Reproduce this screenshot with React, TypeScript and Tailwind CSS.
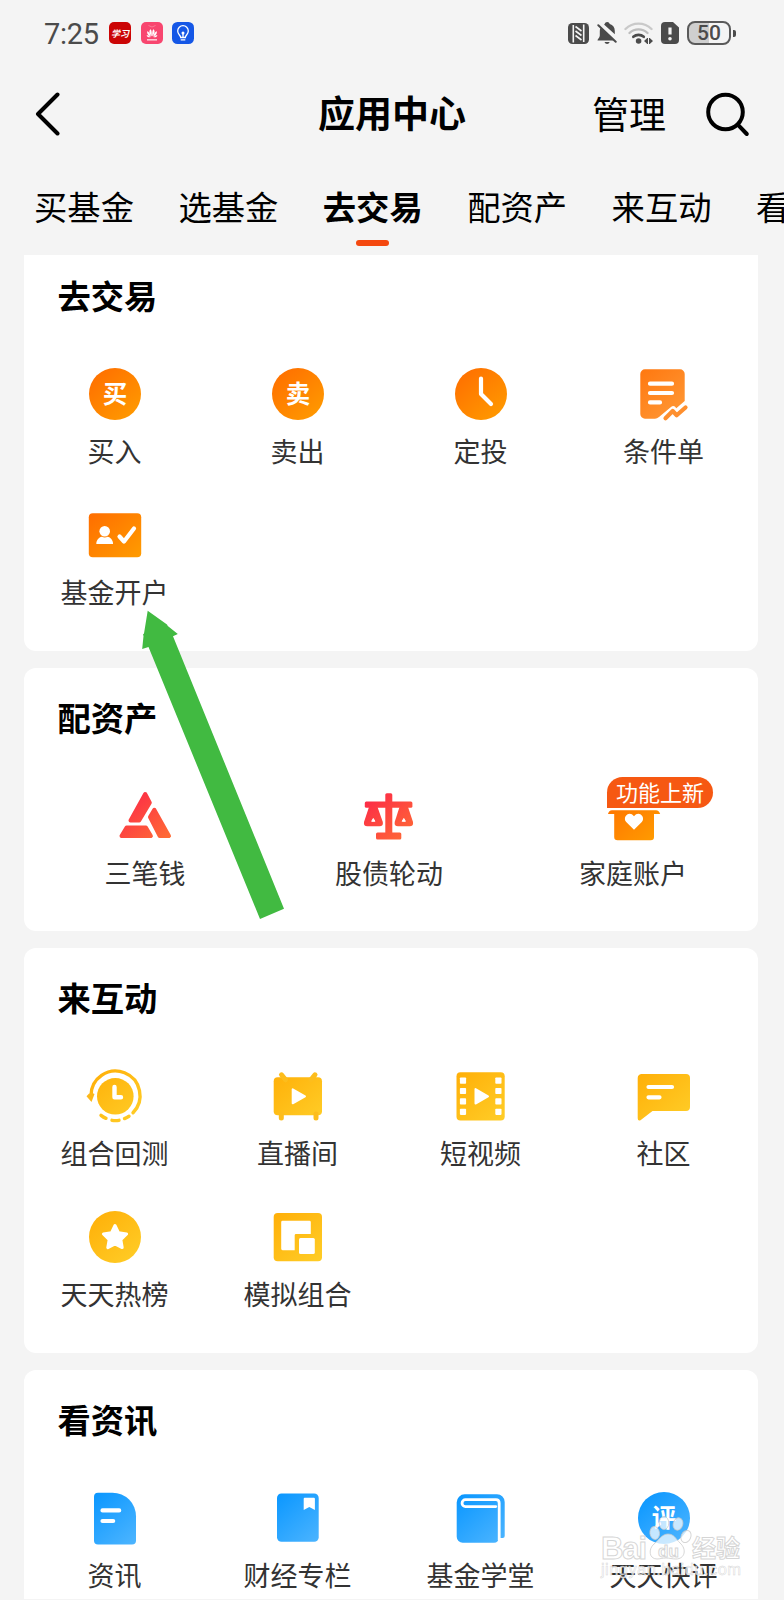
import type { ReactNode } from "react";

type Item = { label: string; icon: ReactNode; badge?: string };
type Section = { title: string; cols: 3 | 4; items: Item[] };

const Icon = ({ children }: { children: ReactNode }) => (
  <svg viewBox="0 0 60 60" className="h-[60px] w-[60px]">
    {children}
  </svg>
);

const Disc = ({ fill, char }: { fill: string; char?: string }) => (
  <>
    <circle cx="30" cy="30" r="26" fill={fill} />
    {char && (
      <text x="30" y="39" fontSize="24.5" fontWeight="700" textAnchor="middle" fill="#fff">
        {char}
      </text>
    )}
  </>
);

const line = {
  fill: "none",
  stroke: "#fff",
  strokeWidth: 4.2,
  strokeLinecap: "round",
  strokeLinejoin: "round",
} as const;

const SECTIONS: Section[] = [
  {
    title: "去交易",
    cols: 4,
    items: [
      { label: "买入", icon: <Disc fill="url(#orange)" char="买" /> },
      { label: "卖出", icon: <Disc fill="url(#orange)" char="卖" /> },
      {
        label: "定投",
        icon: (
          <>
            <Disc fill="url(#orange)" />
            <path d="M30 14.5V30l10 10" {...line} />
          </>
        ),
      },
      {
        label: "条件单",
        icon: (
          <>
            <path
              d="M11 5.3h35a4.7 4.7 0 0 1 4.7 4.700V37l-8.400 7.300q-2.300-4-5.300-1.300L25 53q-2 1.700-4 1.700H11A4.7 4.7 0 0 1 6.3 50V10A4.7 4.7 0 0 1 11 5.3z"
              fill="url(#amber)"
            />
            <path d="M16 19.7h22M16 29h22M16 38.4h10" {...line} />
            <path d="m31.500 54.300 7.200-7.300 4 4.300 8.800-7.800" {...line} stroke="#fe8f2e" />
          </>
        ),
      },
      {
        label: "基金开户",
        icon: (
          <>
            <rect x="3.8" y="8.2" width="52.4" height="44" rx="4" fill="url(#orange)" />
            <circle cx="19.7" cy="26.300" r="5.3" fill="#fff" />
            <path d="M11.3 39c0-4.500 3.500-7 5.400-7.200q3 1.400 6 0c1.900.200 5.400 2.700 5.400 7.200z" fill="#fff" />
            <path d="m34.500 31.500 4.500 5 10-13" {...line} />
          </>
        ),
      },
    ],
  },
  {
    title: "配资产",
    cols: 3,
    items: [
      {
        label: "三笔钱",
        icon: (
          <g fill="url(#red)" stroke="url(#red)" strokeWidth="4" strokeLinejoin="round">
            <path d="M30.2 8 34.8 16.7 24.2 34.4H15.5z" />
            <path d="M11.6 41.5h19.3l5 8.5H6.5z" />
            <path d="M39.3 23.8 54 50h-9.3L35 31z" />
          </g>
        ),
      },
      {
        label: "股债轮动",
        icon: (
          <g fill="url(#red)">
            <rect x="26.3" y="7.3" width="7" height="42" rx="1.5" />
            <rect x="5.8" y="15.6" width="47.6" height="6.2" rx="1.5" />
            <rect x="17" y="46.5" width="25.3" height="6.9" rx="1.5" />
            <path d="M10 21h8.500l5.300 15q.7 4.3-3.3 4.3H8.3q-4 0-3.3-4.3z" />
            <path d="M40.500 21H49L54 36q.7 4.3-3.3 4.3H39q-4 0-3.3-4.3z" />
            <path d="m14.3 32.500-1.600 2.800h3.200zM44.8 32.500l-1.600 2.800h3.200z" fill="#fff" stroke="#fff" />
          </g>
        ),
      },
      {
        label: "家庭账户",
        badge: "功能上新",
        icon: (
          <>
            <path
              d="M9 24.3h44q3 0 4.2 3.8H51V51q0 3.3-3.3 3.3H14.5q-3.3 0-3.3-3.3V28.1H5q.8-3.8 4-3.8z"
              fill="url(#orange)"
            />
            <path
              d="M31 43.800 23.200 36c-4.400-5.200 3.400-12.200 7.800-5.700 4.400-6.500 12.200.5 7.800 5.700z"
              fill="#fff"
            />
          </>
        ),
      },
    ],
  },
  {
    title: "来互动",
    cols: 4,
    items: [
      {
        label: "组合回测",
        icon: (
          <>
            <circle cx="30.3" cy="30.3" r="18.300" fill="url(#yellow)" />
            <g {...line} stroke="url(#yellow)" strokeWidth="3.400">
              <path d="M6 30A24.500 24.500 0 1 1 48 46.700" />
              <path d="M16 49.300q2.500 2 5 3M27 54.300q3.500.7 7 0M39.500 52.600q2.500-1 4.500-2.300" />
            </g>
            <path d="M1.500 30.200q3.500-5 8-2.200L6.500 36z" fill="#fdb81a" />
            <path d="M29.500 21v10.300h6.500" {...line} strokeWidth="4.400" />
          </>
        ),
      },
      {
        label: "直播间",
        icon: (
          <>
            <rect x="5.7" y="11.3" width="48.3" height="37.9" rx="4" fill="url(#yellow)" />
            <path d="m13.500 8.800 4 5M47 8.800l-4 5M13.300 48v4M48 48v4" {...line} stroke="#fdbd1c" strokeWidth="5" />
            <path d="M24.700 23.300v14l12.300-7z" {...line} fill="#fff" strokeWidth="2" />
          </>
        ),
      },
      {
        label: "短视频",
        icon: (
          <>
            <rect x="5.5" y="6.2" width="48.2" height="48.2" rx="4" fill="url(#yellow)" />
            {[11.5, 21.9, 32.3, 42.7].map((y) => (
              <g key={y} fill="#fff">
                <rect x="8.9" y={y} width="6.2" height="6.2" rx="0.8" />
                <rect x="44.3" y={y} width="6.2" height="6.2" rx="0.8" />
              </g>
            ))}
            <path d="M24.500 23v14.600l12.500-7.200z" {...line} fill="#fff" strokeWidth="2" />
          </>
        ),
      },
      {
        label: "社区",
        icon: (
          <>
            <path
              d="M8 8h44a4 4 0 0 1 4 4v29a4 4 0 0 1-4 4H18.500L6.500 54.200q-2.800 1-2.800-2V12A4 4 0 0 1 8 8z"
              fill="url(#yellow)"
            />
            <path d="M14.500 21H38M14.500 31.300h11" {...line} />
          </>
        ),
      },
      {
        label: "天天热榜",
        icon: (
          <>
            <Disc fill="url(#yellow)" />
            <path
              d="m30 18.500 3.600 7.300 8 1.200-5.800 5.600 1.400 8-7.200-3.800-7.200 3.800 1.400-8-5.800-5.600 8-1.200z"
              {...line}
              fill="#fff"
              strokeWidth="3"
            />
          </>
        ),
      },
      {
        label: "模拟组合",
        icon: (
          <>
            <rect x="5.7" y="6" width="48.3" height="48.3" rx="4" fill="url(#yellow)" />
            <path
              d="M14.600 13.800h26.800q1.400 0 1.400 1.400V27H28q-1.300 0-1.300 1.300V43.200H14.600q-1.400 0-1.400-1.400V15.200q0-1.400 1.400-1.400z"
              fill="#fff"
            />
            <rect x="31" y="31" width="15.8" height="16" rx="1.5" fill="#fff" />
          </>
        ),
      },
    ],
  },
  {
    title: "看资讯",
    cols: 4,
    items: [
      {
        label: "资讯",
        icon: (
          <>
            <path
              d="M13 4.700h14.500A23.500 23.500 0 0 1 51 28.200v24.300a4 4 0 0 1-4 4H13a4 4 0 0 1-4-4V8.700a4 4 0 0 1 4-4z"
              fill="url(#blue)"
            />
            <path d="M17.500 22.400h16.700M17.500 33h10.700" {...line} />
          </>
        ),
      },
      {
        label: "财经专栏",
        icon: (
          <>
            <rect x="9" y="5.5" width="41.7" height="48.2" rx="4.5" fill="url(#blue)" />
            <path d="M35.700 10.700q0-1 1-1h9.200q1 0 1 1V22l-5.600-3-5.600 3z" fill="#fff" />
          </>
        ),
      },
      {
        label: "基金学堂",
        icon: (
          <>
            <path
              d="M13.700 6.300H46a7.700 7.700 0 0 1 7.700 7.700v34q0 2-2 2H48v-.5a5 5 0 0 1-5 5.200H11.700a6 6 0 0 1-6-6V14.300a8 8 0 0 1 8-8z"
              fill="url(#blue)"
            />
            <path
              d="M48.200 52V15q0-3.300-3.300-3.300H14.500a3.300 3.300 0 0 0 0 6.900h30.300"
              {...line}
              strokeWidth="2.8"
            />
          </>
        ),
      },
      { label: "天天快评", icon: <Disc fill="url(#blue)" char="评" /> },
    ],
  },
];

const GRADIENTS = [
  ["orange", "#ff7000", "#ff9a00"],
  ["amber", "#ff7a12", "#ff9a38"],
  ["red", "#fc2848", "#ff6b35"],
  ["yellow", "#ffb10a", "#ffcc26"],
  ["blue", "#0d98ff", "#4bb4ff"],
];

// Shared by every icon through fill="url(#...)"
function Gradients() {
  return (
    <svg className="absolute h-0 w-0">
      <defs>
        {GRADIENTS.map(([id, from, to]) => (
          <linearGradient
            key={id}
            id={id}
            gradientUnits="userSpaceOnUse"
            x1="10"
            y1="8"
            x2="50"
            y2="54"
          >
            <stop stopColor={from} />
            <stop offset="1" stopColor={to} />
          </linearGradient>
        ))}
      </defs>
    </svg>
  );
}

function StatusBar() {
  return (
    <div className="flex h-[66px] items-center pl-[44px] pr-[48px] text-[#4b4b4b]">
      <span className="w-[65px] pt-[2px] font-['Roboto',sans-serif] text-[29px] font-[450] leading-none tracking-[-0.3px]">
        7:25
      </span>
      <div className="flex gap-[9.5px]">
        <span className="flex h-[22px] w-[22px] items-center justify-center overflow-hidden rounded-[5px] bg-[#cb0505] text-[9px] font-bold italic leading-none text-white">
          学习
        </span>
        <svg viewBox="0 0 22 22" className="h-[22px] w-[22px]">
          <rect width="22" height="22" rx="5" fill="#f8466f" />
          <g fill="#fff">
            <path d="M10.700 14.500C8 11 7.600 8.500 9.800 7.300q1.300 2 .9 7.200zM11.300 14.500c2.700-3.500 3.100-6 .9-7.200q-1.300 2-.9 7.200zM10 14.800C6.500 13 5.500 11 6.500 9q2.500 1.500 3.500 5.800zM12 14.800c3.500-1.800 4.500-3.800 3.500-5.800q-2.500 1.500-3.500 5.800zM9.500 15.300c-2.500.3-3.700-.8-3.800-2.300q2.500.3 3.800 2.300zM12.500 15.300c2.500.3 3.700-.8 3.800-2.300q-2.500.3-3.800 2.300z" />
            <path d="M6 17h10v1.600H6z" opacity=".7" />
          </g>
          <path d="M7.500 3.500q3.500 3 7 0" fill="none" stroke="#fb8fa6" strokeWidth=".7" />
        </svg>
        <svg viewBox="0 0 22 22" className="h-[22px] w-[22px]">
          <rect width="22" height="22" rx="5.5" fill="#1557e6" />
          <g fill="none" stroke="#fff" strokeWidth="1.3">
            <path d="M8.700 15.500c0-2.300-3-3-3-6.500a5.300 5.300 0 0 1 10.600 0c0 3.500-3 4.200-3 6.500z" />
            <path d="M8.700 17.800h4.600M11 11v4" />
          </g>
          <circle cx="11" cy="11" r="1.5" fill="#fff" />
        </svg>
      </div>

      <div className="ml-auto flex items-center">
        <svg viewBox="0 0 21 21" className="h-[21px] w-[21px]" fill="#4b4b4b">
          <rect width="21" height="21" rx="4.5" />
          <path
            d="M5.300 19.500V2M15.700 1.500V19M7.500 3.500l6 4.500M7.500 8l6 4.500M7.500 12.500l6 4.500"
            fill="none"
            stroke="#f4f4f4"
            strokeWidth="1.6"
          />
        </svg>
        <svg viewBox="0 0 20 22" className="ml-2 h-[22px] w-[20px]" fill="#4b4b4b">
          <path d="M7.500 2.300C8.200.8 8.800 0 10.200 0s2 .8 2.600 2c3.200 1 5 3.500 5 7v3.200L7 2.500zM3.500 6 17 18.500H.5c0-1.700 2.300-2.500 2.300-5V9c0-1.200.2-2 .7-3zM7.500 20h5.200c-.6 1.300-1.400 1.900-2.600 1.900S8 21.300 7.500 20z" />
          <path d="m1.300 3.300 17.400 16.400" stroke="#4b4b4b" strokeWidth="2" strokeLinecap="round" />
        </svg>
        <svg viewBox="0 0 30 22" className="ml-[7px] h-[22px] w-[30px]" fill="none">
          <path d="M1.500 7a18.500 18.500 0 0 1 26 0" stroke="#c9c9c9" strokeWidth="2.4" strokeLinecap="round" />
          <path d="M5.500 11a13 13 0 0 1 18 0" stroke="#bdbdbd" strokeWidth="2.4" strokeLinecap="round" />
          <path d="M9.300 14.800a8 8 0 0 1 10.500 0" stroke="#4b4b4b" strokeWidth="2.600" strokeLinecap="round" />
          <circle cx="14.600" cy="19" r="2.800" fill="#4b4b4b" />
          <path d="m20 19 3-2.800v5.600zM29 19l-3-2.800v5.600z" fill="#4b4b4b" />
          <path d="M23.500 16v6M25.500 16v6" stroke="#4b4b4b" />
        </svg>
        <svg viewBox="0 0 18 22" className="ml-[7px] h-[22px] w-[18px]">
          <path d="M4 0h8l6 5.500V18a4 4 0 0 1-4 4H4a4 4 0 0 1-4-4V4a4 4 0 0 1 4-4z" fill="#4b4b4b" />
          <path d="M9 5.500v7" stroke="#f4f4f4" strokeWidth="3.2" />
          <circle cx="9" cy="16.8" r="1.8" fill="#f4f4f4" />
        </svg>
        <div className="ml-2 flex h-6 w-11 items-center justify-center rounded-[8px] border-2 border-[#5a5a5a] bg-linear-to-r from-[#cfcfcf] from-50% to-[#f4f4f4] to-50% font-['Roboto',sans-serif] text-[21px] font-medium leading-none">
          50
        </div>
        <span className="ml-[2px] h-[7px] w-[3px] rounded-r-[2px] bg-[#4b4b4b]" />
      </div>
    </div>
  );
}

function Header() {
  return (
    <header className="grid h-24 grid-cols-3 items-center pl-[34px] pr-[34px] text-[37px] leading-none">
      <svg viewBox="0 0 28 44" className="h-11 w-7">
        <path d="M23.500 2.500 4 22l19.500 19.500" {...line} stroke="#000" strokeWidth="4" />
      </svg>
      <h1 className="whitespace-nowrap pb-[4px] text-center font-bold">应用中心</h1>
      <div className="flex items-center justify-end gap-[38px]">
        <span className="pb-[2px]">管理</span>
        <svg viewBox="0 0 46 46" className="h-[46px] w-[46px]" fill="none" stroke="#000">
          <circle cx="21.500" cy="21" r="17.300" strokeWidth="4" />
          <path d="M34.500 34.300 42.800 43" strokeWidth="4" strokeLinecap="round" />
        </svg>
      </div>
    </header>
  );
}

const TABS = ["买基金", "选基金", "去交易", "配资产", "来互动", "看资讯"];

function Tabs() {
  const active = "去交易";
  return (
    <nav className="flex h-[93px] gap-[44.400px] overflow-hidden pl-[34px] pt-[21px] text-[33.300px]">
      {TABS.map((tab) => (
        <div key={tab} className="flex w-[100px] shrink-0 flex-col items-center">
          <span
            className={
              tab === active
                ? "whitespace-nowrap font-bold leading-[46px]"
                : "whitespace-nowrap leading-[46px]"
            }
          >
            {tab}
          </span>
          {tab === active && (
            <span className="mt-[11px] h-[6px] w-[33px] rounded-full bg-[#f4480f]" />
          )}
        </div>
      ))}
    </nav>
  );
}

function Card({ section }: { section: Section }) {
  return (
    <section className="rounded-xl bg-white pb-[20.700px] first:rounded-t-none">
      <h2 className="pb-1 pl-[33.500px] text-[33.300px] font-bold leading-[98px]">{section.title}</h2>
      <div
        className={
          section.cols === 3
            ? "-ml-px mr-[3.300px] grid grid-cols-3"
            : "-ml-px mr-[3.300px] grid grid-cols-4"
        }
      >
        {section.items.map(({ label, icon, badge }) => (
          <div key={label} className="flex h-[141px] flex-col items-center pt-4">
            <div className="relative">
              <Icon>{icon}</Icon>
              {badge && (
                <span className="absolute left-1 top-[-9px] flex h-[31px] w-[106px] items-center justify-center whitespace-nowrap rounded-[16px] rounded-bl-none bg-[#f65812] pb-[3px] text-[22px] leading-none text-white ring-1 ring-white">
                  {badge}
                </span>
              )}
            </div>
            <span className="mt-[7px] whitespace-nowrap text-[27px] leading-10 text-[#333]">
              {label}
            </span>
          </div>
        ))}
      </div>
    </section>
  );
}

// Green pointer laid over the cards, aimed at 基金开户
function Pointer() {
  return (
    <svg
      viewBox="0 0 144 312"
      className="pointer-events-none absolute left-[141px] top-[609px] h-[312px] w-[144px]"
      fill="#41ba41"
    >
      <path d="M6.700 1.700 26 15.500l.8 1.500 10 8-4.800 2.300L143 299.700l-24 10.300L7.500 38l-6.300 2L2.500 27 2 25.500l1-1z" />
    </svg>
  );
}

function Watermark() {
  return (
    <svg
      viewBox="0 0 146 72"
      className="pointer-events-none absolute left-[599px] top-[1514px] h-[72px] w-[146px]"
    >
      <g fill="#fff" fillOpacity=".72" stroke="#c8c8c8" strokeOpacity=".75" strokeWidth="1">
        <ellipse cx="55.700" cy="19" rx="4.800" ry="6.500" transform="rotate(-8 55.700 19)" />
        <ellipse cx="65" cy="9" rx="4.800" ry="6.500" />
        <ellipse cx="79" cy="10" rx="4.800" ry="6.300" transform="rotate(15 79 10)" />
        <ellipse cx="87" cy="22.500" rx="4.800" ry="6.300" transform="rotate(25 87 22.500)" />
        <path d="M69 20c6 0 8 5 12 9 7 6 5 16-4 16-4 0-6-1-10-1s-6 1-9 1c-8 0-9-10-3-15 5-4 8-10 14-10z" />
        <text
          x="2"
          y="44.5"
          fontSize="31"
          fontWeight="700"
          fontFamily="'Liberation Sans', sans-serif"
          textLength="46"
        >
          Bai
        </text>
        <text
          x="59"
          y="43"
          fontSize="17"
          fontWeight="700"
          fontFamily="'Liberation Sans', sans-serif"
        >
          du
        </text>
        <text x="93" y="43" fontSize="24" fontWeight="700">
          经验
        </text>
        <text
          x="2"
          y="61"
          fontSize="16.5"
          fontFamily="'Liberation Sans', sans-serif"
          textLength="140"
          strokeWidth=".5"
        >
          jingyan.baidu.com
        </text>
      </g>
    </svg>
  );
}

export default function App() {
  return (
    <div className="relative h-[1600px] w-[784px] overflow-hidden bg-[#f4f4f4] font-['Noto_Sans_CJK_SC',sans-serif] text-black">
      <Gradients />
      <StatusBar />
      <Header />
      <Tabs />
      <main className="h-[1344px] overflow-hidden pl-6 pr-[25.700px]">
        <div className="-mt-[9px] flex flex-col gap-[17px]">
          {SECTIONS.map((section) => (
            <Card key={section.title} section={section} />
          ))}
        </div>
      </main>
      <Pointer />
      <Watermark />
    </div>
  );
}
